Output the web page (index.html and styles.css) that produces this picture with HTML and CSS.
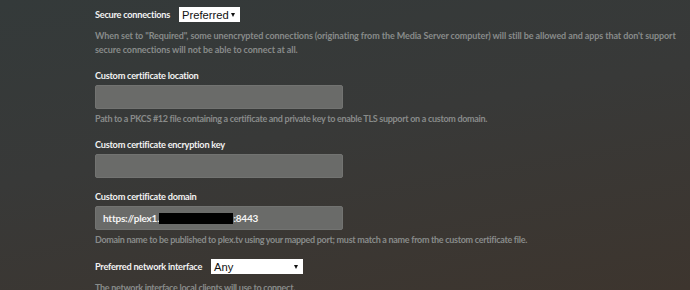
FILE: index.html
```html
<!DOCTYPE html>
<html lang="en">
<head>
    <meta charset="UTF-8">
    <meta name="viewport" content="width=device-width, initial-scale=1.0">
    <title>Network Settings</title>
    <link rel="stylesheet" href="styles.css">
</head>
<body>
    <div class="settings">
        <!-- Secure connections -->
        <div class="setting inline">
            <div class="setting-row">
                <label class="setting-label">Secure connections</label>
                <div class="select select-secure">
                    <span>Preferred</span>
                    <span class="caret"></span>
                </div>
            </div>
            <p class="help help-wide">When set to "Required", some unencrypted connections (originating from the Media Server computer) will still be allowed and apps that don't support secure connections will not be able to connect at all.</p>
        </div>

        <div class="setting">
            <label class="setting-label">Custom certificate location</label>
            <div class="text-input"></div>
            <p class="help">Path to a PKCS #12 file containing a certificate and private key to enable TLS support on a custom domain.</p>
        </div>

        <div class="setting">
            <label class="setting-label">Custom certificate encryption key</label>
            <div class="text-input"></div>
        </div>

        <div class="setting">
            <label class="setting-label">Custom certificate domain</label>
            <div class="text-input">https://plex1.<span class="redacted"></span>:8443</div>
            <p class="help">Domain name to be published to plex.tv using your mapped port; must match a name from the custom certificate file.</p>
        </div>

        <div class="setting inline">
            <div class="setting-row">
                <label class="setting-label">Preferred network interface</label>
                <div class="select select-interface">
                    <span>Any</span>
                    <span class="caret"></span>
                </div>
            </div>
            <p class="help">The network interface local clients will use to connect.</p>
        </div>
    </div>
</body>
</html>
```

FILE: styles.css
```css
* {
    margin: 0;
    padding: 0;
    box-sizing: border-box;
}

html, body {
    height: 100%;
}

body {
    font-family: Lato, 'Open Sans', sans-serif;
    background: linear-gradient(170deg, #343a3a 0%, #383938 45%, #3d352e 100%);
    color: #fff;
    overflow: hidden;
}

.settings {
    padding: 7px 0 0 95px;
    width: 690px;
}

.setting {
    margin-bottom: 12px;
}

.setting-label {
    display: block;
    font-size: 9.2px;
    font-weight: 700;
    line-height: 14px;
    margin-bottom: 2px;
    color: #f2f2f2;
    letter-spacing: -0.25px;
}

.setting-row {
    display: flex;
    align-items: center;
    gap: 9px;
}

.setting-row .setting-label {
    margin-bottom: 0;
}

.help {
    font-size: 9px;
    font-weight: 700;
    line-height: 14px;
    color: #888b8a;
    margin-top: 3px;
    max-width: 585px;
    letter-spacing: -0.3px;
}

.help-wide {
    letter-spacing: -0.1px;
}

.inline .help {
    margin-top: 7px;
}

.text-input {
    width: 248px;
    height: 24px;
    background: #6a6b69;
    border-radius: 2px;
    border: 1px solid #727371;
    font-size: 10px;
    font-weight: 700;
    line-height: 22px;
    padding-left: 7px;
    color: #f4f4f4;
    letter-spacing: -0.2px;
}

.redacted {
    background: #000;
    display: inline-block;
    width: 74px;
    height: 11px;
    vertical-align: -2px;
}

.select {
    display: flex;
    align-items: center;
    justify-content: space-between;
    background: #fff;
    color: #111;
    height: 15px;
    font-family: 'Liberation Sans', Arial, sans-serif;
    font-size: 11.2px;
    padding: 0 5px 0 3px;
}

.select-secure {
    width: 61px;
}

.select-interface {
    width: 92px;
}

.caret {
    width: 0;
    height: 0;
    border-left: 2px solid transparent;
    border-right: 2px solid transparent;
    border-top: 4px solid #111;
}
```
